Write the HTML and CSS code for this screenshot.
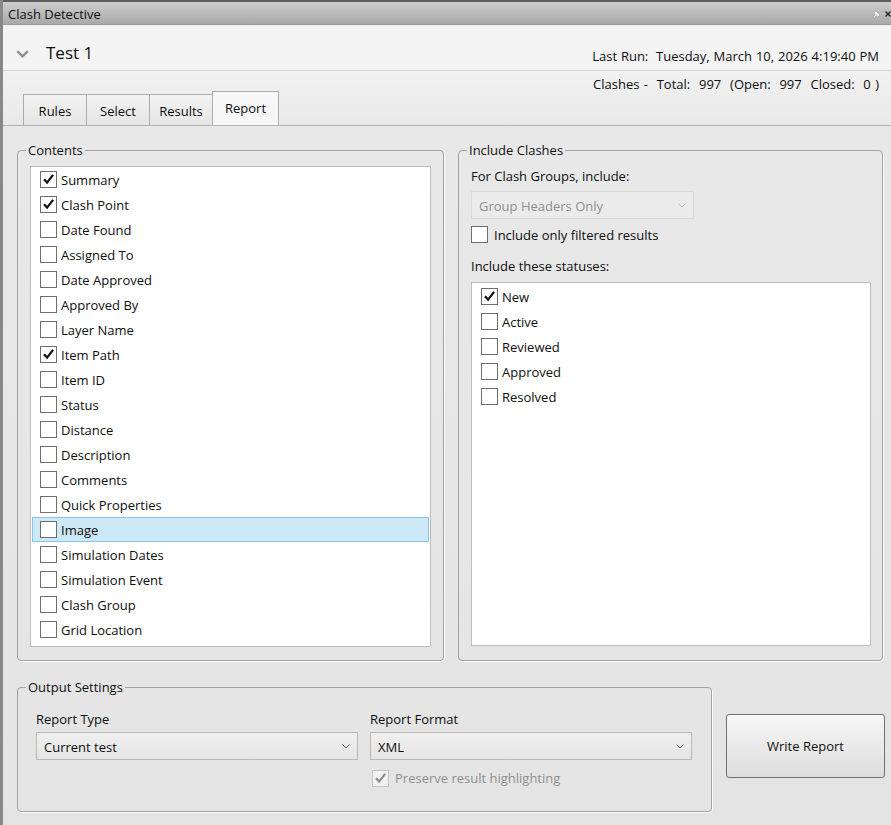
FILE: index.html
```html
<!DOCTYPE html>
<html>
<head>
<meta charset="utf-8">
<title>Clash Detective</title>
<link rel="stylesheet" href="styles.css">
</head>
<body>
<div class="window">
  <div class="titlebar">
    <span class="title">Clash Detective</span>
    <span class="tb-icons">
      <svg class="pin" viewBox="0 0 7 7" width="7" height="7"><path d="M1 6 L3 4 M2.5 1.5 L5.5 4.5 M3 1 L6 4 L4.5 5 L2 2.5 Z" fill="#e8e8e8" stroke="#f4f4f4" stroke-width="1"/></svg>
      <svg class="close" viewBox="0 0 6 6" width="6" height="6"><path d="M0.5 0.5 L5.5 5.5 M5.5 0.5 L0.5 5.5" stroke="#222" stroke-width="1.3"/></svg>
    </span>
  </div>

  <div class="header">
    <div class="test-name">
      <svg class="chev" viewBox="0 0 13 8" width="13" height="8"><path d="M1.2 1.2 L6.5 6.3 L11.8 1.2" fill="none" stroke="#8e8e8e" stroke-width="2.4"/></svg>
      <span>Test 1</span>
    </div>
    <div class="last-run">Last Run:  Tuesday, March 10, 2026 4:19:40 PM</div>
  </div>

  <div class="subheader">
    <div class="stats">Clashes -  Total:  997  (Open:  997  Closed:  0 )</div>
    <div class="tabs">
      <div class="tab">Rules</div>
      <div class="tab">Select</div>
      <div class="tab">Results</div>
      <div class="tab active">Report</div>
    </div>
  </div>

  <div class="content">
    <div class="top-row">
      <fieldset class="group contents">
        <legend>Contents</legend>
        <ul class="list contents-list">
          <li class="row"><span class="cb"><svg viewBox="0 0 17 17"><path d="M3.4 8.3 L6.9 12 L13.7 3.3" fill="none" stroke="#111" stroke-width="2.6"/></svg></span><span class="lbl">Summary</span></li>
          <li class="row"><span class="cb"><svg viewBox="0 0 17 17"><path d="M3.4 8.3 L6.9 12 L13.7 3.3" fill="none" stroke="#111" stroke-width="2.6"/></svg></span><span class="lbl">Clash Point</span></li>
          <li class="row"><span class="cb"></span><span class="lbl">Date Found</span></li>
          <li class="row"><span class="cb"></span><span class="lbl">Assigned To</span></li>
          <li class="row"><span class="cb"></span><span class="lbl">Date Approved</span></li>
          <li class="row"><span class="cb"></span><span class="lbl">Approved By</span></li>
          <li class="row"><span class="cb"></span><span class="lbl">Layer Name</span></li>
          <li class="row"><span class="cb"><svg viewBox="0 0 17 17"><path d="M3.4 8.3 L6.9 12 L13.7 3.3" fill="none" stroke="#111" stroke-width="2.6"/></svg></span><span class="lbl">Item Path</span></li>
          <li class="row"><span class="cb"></span><span class="lbl">Item ID</span></li>
          <li class="row"><span class="cb"></span><span class="lbl">Status</span></li>
          <li class="row"><span class="cb"></span><span class="lbl">Distance</span></li>
          <li class="row"><span class="cb"></span><span class="lbl">Description</span></li>
          <li class="row"><span class="cb"></span><span class="lbl">Comments</span></li>
          <li class="row"><span class="cb"></span><span class="lbl">Quick Properties</span></li>
          <li class="row selected"><span class="cb"></span><span class="lbl">Image</span></li>
          <li class="row"><span class="cb"></span><span class="lbl">Simulation Dates</span></li>
          <li class="row"><span class="cb"></span><span class="lbl">Simulation Event</span></li>
          <li class="row"><span class="cb"></span><span class="lbl">Clash Group</span></li>
          <li class="row"><span class="cb"></span><span class="lbl">Grid Location</span></li>
        </ul>
      </fieldset>

      <fieldset class="group include">
        <legend>Include Clashes</legend>
        <div class="field-label first">For Clash Groups, include:</div>
        <div class="combo disabled group-combo">
          <span>Group Headers Only</span>
          <svg class="combo-arrow" viewBox="0 0 8 5" width="8" height="5"><path d="M0.5 0.5 L4 4 L7.5 0.5" fill="none" stroke="#b8b8b8" stroke-width="1"/></svg>
        </div>
        <div class="check-line filtered"><span class="cb"></span><span class="lbl">Include only filtered results</span></div>
        <div class="field-label statuses-label">Include these statuses:</div>
        <ul class="list status-list">
          <li class="row"><span class="cb"><svg viewBox="0 0 17 17"><path d="M3.4 8.3 L6.9 12 L13.7 3.3" fill="none" stroke="#111" stroke-width="2.6"/></svg></span><span class="lbl">New</span></li>
          <li class="row"><span class="cb"></span><span class="lbl">Active</span></li>
          <li class="row"><span class="cb"></span><span class="lbl">Reviewed</span></li>
          <li class="row"><span class="cb"></span><span class="lbl">Approved</span></li>
          <li class="row"><span class="cb"></span><span class="lbl">Resolved</span></li>
        </ul>
      </fieldset>
    </div>

    <div class="bottom-row">
      <fieldset class="group output">
        <legend>Output Settings</legend>
        <div class="out-cols">
          <div class="out-col">
            <div class="field-label">Report Type</div>
            <div class="combo">
              <span>Current test</span>
              <svg class="combo-arrow" viewBox="0 0 8 5" width="8" height="5"><path d="M0.5 0.5 L4 4 L7.5 0.5" fill="none" stroke="#606060" stroke-width="1"/></svg>
            </div>
          </div>
          <div class="out-col">
            <div class="field-label">Report Format</div>
            <div class="combo">
              <span>XML</span>
              <svg class="combo-arrow" viewBox="0 0 8 5" width="8" height="5"><path d="M0.5 0.5 L4 4 L7.5 0.5" fill="none" stroke="#606060" stroke-width="1"/></svg>
            </div>
            <div class="check-line preserve"><span class="cb dis"><svg viewBox="0 0 17 17"><path d="M3.4 8.3 L6.9 12 L13.7 3.3" fill="none" stroke="#8c8c8c" stroke-width="2.4"/></svg></span><span class="lbl">Preserve result highlighting</span></div>
          </div>
        </div>
      </fieldset>
      <button class="write-btn">Write Report</button>
    </div>
  </div>
</div>
</body>
</html>
```

FILE: styles.css
```css
* { box-sizing: border-box; }
html, body { margin: 0; padding: 0; }
body {
  width: 891px;
  height: 825px;
  overflow: hidden;
  font-family: "Open Sans", "Noto Sans", sans-serif;
  font-size: 13px;
  color: #0e0e0e;
  background: #e6e6e6;
}

.window {
  height: 825px;
  border-left: 3px solid #888888;
  display: flex;
  flex-direction: column;
}

/* title bar */
.titlebar {
  height: 25px;
  flex: none;
  border-top: 2px solid #5e5e5e;
  border-bottom: 1px solid #9a9a9a;
  background: linear-gradient(#cdcdcd, #a9a9a9);
  display: flex;
  align-items: center;
  justify-content: space-between;
  padding: 1px 0 0 5px;
}
.title { font-size: 13px; color: #111; line-height: 18px; }
.tb-icons { display: flex; align-items: center; gap: 5px; margin-right: 0; }
.tb-icons .pin { margin-top: 1px; }

/* header */
.header {
  height: 46px;
  flex: none;
  background: #f4f4f4;
  border-bottom: 1px solid #d2d2d2;
  display: flex;
  align-items: center;
  justify-content: space-between;
  padding: 11px 12px 0 13px;
}
.test-name { display: flex; align-items: center; gap: 17px; }
.test-name span { font-size: 17px; line-height: 22px; color: #111; }
.chev { margin-top: 1px; }
.last-run { white-space: pre; margin-top: 6px; line-height: 18px; word-spacing: 0.5px; }

/* sub header with stats + tabs */
.subheader {
  height: 55px;
  flex: none;
  background: linear-gradient(#f1f1f1, #e9e9e9);
  border-bottom: 1px solid #b2b2b2;
  display: flex;
  flex-direction: column;
}
.stats {
  height: 20px;
  padding: 5px 12px 0 0;
  line-height: 16px;
  text-align: right;
  white-space: pre;
  word-spacing: 1px;
}
.tabs {
  height: 34px;
  display: flex;
  align-items: flex-end;
  padding-left: 20px;
}
.tab {
  width: 64px;
  height: 31px;
  padding-top: 1px;
  border: 1px solid #acacac;
  border-bottom: none;
  background: linear-gradient(#f2f2f2, #e6e6e6);
  display: flex;
  align-items: center;
  justify-content: center;
  margin-left: -1px;
}
.tab:first-child { margin-left: 0; }
.tab.active {
  width: 67px;
  height: 34px;
  background: #f7f7f7;
  padding: 0 0 1px;
}

/* main content */
.content {
  flex: 1;
  padding: 15px 0 0 14px;
  background: linear-gradient(#e8e8e8, #e4e4e4);
}
.top-row { display: flex; gap: 14px; }

.group {
  margin: 0;
  border: 1px solid #a2a2a2;
  border-radius: 4px;
  box-shadow: 1px 1px 0 #fafafa;
  padding: 0 12px 13px 12px;
  min-width: 0;
}
.group legend {
  padding: 0 2px;
  margin-left: -4px;
  line-height: 18px;
  color: #111;
}
.contents { width: 427px; padding-top: 7px; }
.include { width: 425px; padding-right: 11px; }

.list {
  list-style: none;
  margin: 0;
  padding: 0 1px;
  background: #ffffff;
  border: 1px solid #bdbdbd;
}
.contents-list { height: 481px; }
.status-list { height: 364px; margin-top: 7px; }

.row {
  height: 25px;
  display: flex;
  align-items: center;
  padding-left: 7px;
  border: 1px solid transparent;
}
.status-list .row:first-child { margin-top: 1px; }
.row.selected {
  background: #cde8f7;
  border-color: #84c7ee;
}
.cb {
  width: 17px;
  height: 17px;
  flex: none;
  border: 1px solid #6e6e6e;
  background: #ffffff;
  display: block;
}
.cb svg { display: block; width: 15px; height: 15px; }
.cb.dis { border-color: #c4c4c4; background: #f1f1f1; }
.lbl { margin-left: 4px; line-height: 18px; white-space: nowrap; }

.field-label { line-height: 18px; }
.field-label.first { margin-top: 8px; }

.combo {
  height: 28px;
  border: 1px solid #b9b9b9;
  background: linear-gradient(#f0f0f0, #e5e5e5);
  display: flex;
  align-items: center;
  justify-content: space-between;
  padding: 1px 7px 0 7px;
  margin-top: 4px;
}
.combo.disabled {
  background: #ebebeb;
  border-color: #d9d9d9;
  color: #8f8f8f;
}
.group-combo { width: 223px; margin-top: 6px; }

.check-line { display: flex; align-items: center; height: 17px; }
.filtered { margin-top: 7px; }
.filtered .lbl { margin-left: 6px; }
.statuses-label { margin-top: 14px; }

/* bottom */
.bottom-row { display: flex; gap: 14px; margin-top: 17px; align-items: flex-start; }
.output { width: 695px; padding: 14px 18px 25px 12px; }
.out-cols {
  display: grid;
  grid-template-columns: 322px 322px;
  gap: 12px;
  margin-left: 6px;
}
.preserve { margin-top: 10px; margin-left: 2px; height: 16px; color: #8f8f8f; }
.preserve .lbl { margin-left: 6px; }

.write-btn {
  margin-top: 36px;
  width: 159px;
  height: 64px;
  border: 1px solid #707070;
  border-radius: 3px;
  background: linear-gradient(#f7f7f7, #dddddd);
  font-family: inherit;
  font-size: 13px;
  color: #111;
  padding: 0;
}
```
